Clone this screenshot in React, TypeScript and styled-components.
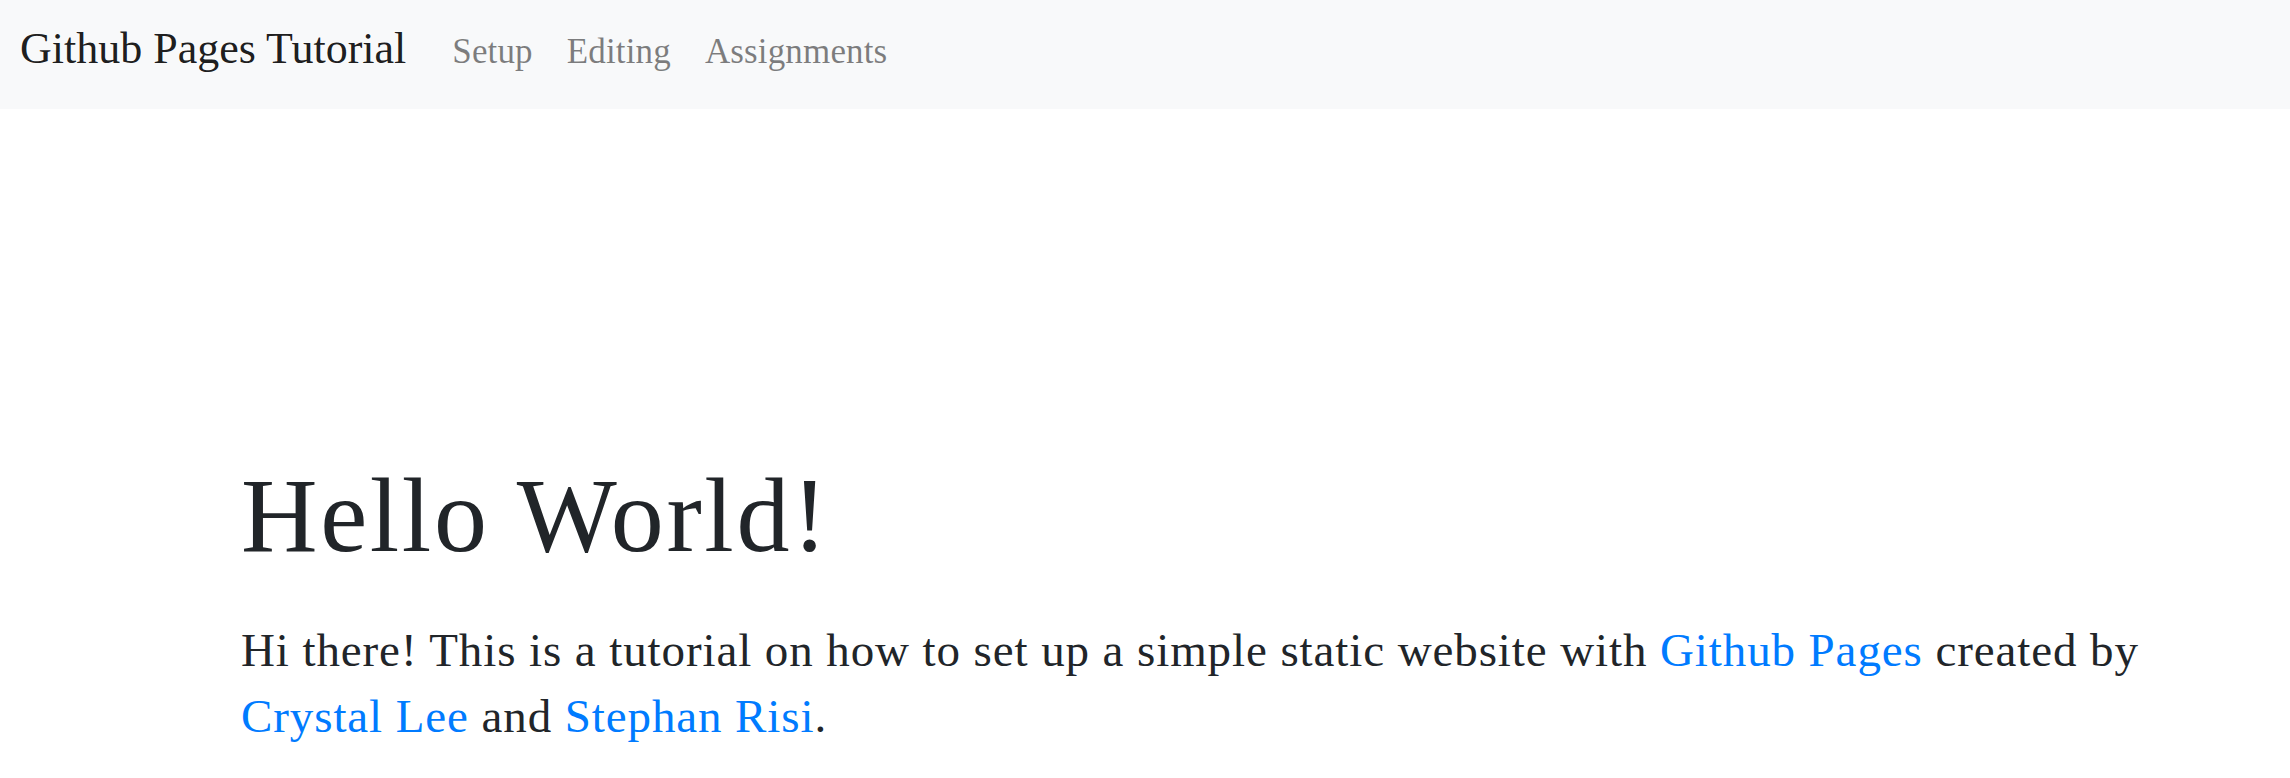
import React from "react";
import styled, { createGlobalStyle } from "styled-components";

const GlobalStyle = createGlobalStyle`
  html, body { margin: 0; padding: 0; background: #ffffff; }
  body {
    font-family: "Liberation Serif", "Times New Roman", serif;
    color: #212529;
    -webkit-font-smoothing: antialiased;
  }
  * { box-sizing: border-box; }
`;

const Navbar = styled.nav`
  display: flex;
  align-items: baseline;
  height: 109px;
  padding: 27px 20px 0 20px;
  background: #f8f9fa;
`;

const Brand = styled.a`
  font-size: 44px;
  line-height: 1;
  color: rgba(0, 0, 0, 0.9);
  text-decoration: none;
  white-space: nowrap;
`;

const NavList = styled.ul`
  display: flex;
  align-items: baseline;
  gap: 34px;
  list-style: none;
  margin: 0 0 0 46px;
  padding: 0;
`;

const NavLink = styled.a`
  font-size: 35px;
  line-height: 1;
  letter-spacing: 0.15px;
  color: rgba(0, 0, 0, 0.5);
  text-decoration: none;
`;

const Main = styled.main`
  padding: 343px 0 0 241px;
`;

const Content = styled.section`
  max-width: 1925px;
`;

const Title = styled.h1`
  margin: 0 0 38px 0;
  font-size: 106px;
  font-weight: 400;
  line-height: 1.2;
  letter-spacing: 2.6px;
  color: #212529;
`;

const Lead = styled.p`
  margin: 0;
  font-size: 47px;
  line-height: 66px;
  letter-spacing: 0.9px;
  color: #212529;
`;

const Link = styled.a`
  color: #007bff;
  text-decoration: none;
`;

export default function App() {
  return (
    <>
      <GlobalStyle />
      <Navbar>
        <Brand href="#">Github Pages Tutorial</Brand>
        <NavList>
          <li><NavLink href="#">Setup</NavLink></li>
          <li><NavLink href="#">Editing</NavLink></li>
          <li><NavLink href="#">Assignments</NavLink></li>
        </NavList>
      </Navbar>
      <Main>
        <Content>
          <Title>Hello World!</Title>
          <Lead>
            Hi there! This is a tutorial on how to set up a simple static website with{" "}
            <Link href="#">Github Pages</Link> created by{" "}
            <Link href="#">Crystal Lee</Link> and <Link href="#">Stephan Risi</Link>.
          </Lead>
        </Content>
      </Main>
    </>
  );
}
